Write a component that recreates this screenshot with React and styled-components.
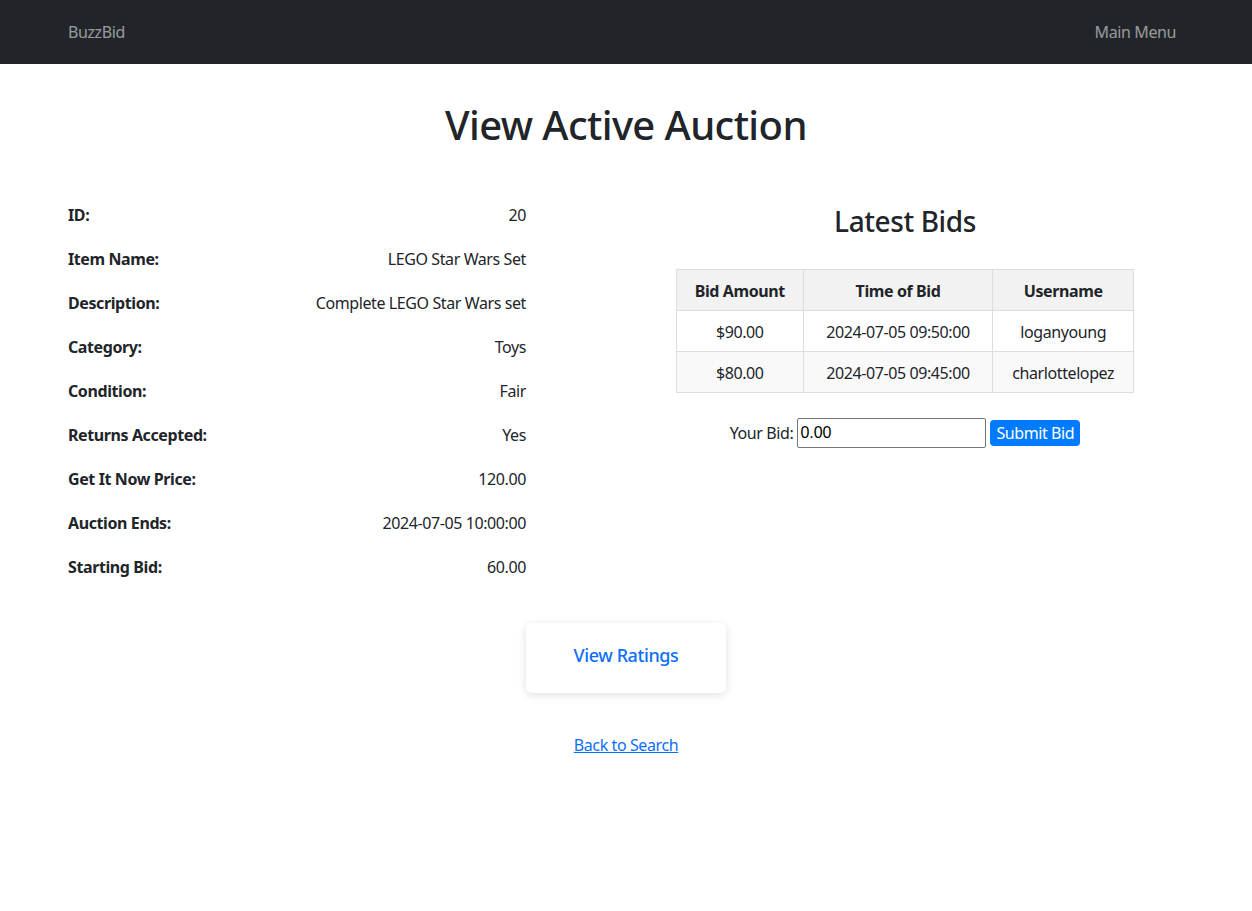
import styled, { createGlobalStyle } from 'styled-components';

const GlobalStyle = createGlobalStyle`
    body {
        margin: 0;
        font-family: "Noto Sans", "Open Sans", sans-serif;
        font-size: 16px;
        line-height: 1.5;
        letter-spacing: -0.4px;
        color: #212529;
        background: #fff;
    }
    * { box-sizing: border-box; }
`;

const details = [
    { label: 'ID:', value: '20' },
    { label: 'Item Name:', value: 'LEGO Star Wars Set' },
    { label: 'Description:', value: 'Complete LEGO Star Wars set' },
    { label: 'Category:', value: 'Toys' },
    { label: 'Condition:', value: 'Fair' },
    { label: 'Returns Accepted:', value: 'Yes' },
    { label: 'Get It Now Price:', value: '120.00' },
    { label: 'Auction Ends:', value: '2024-07-05 10:00:00' },
    { label: 'Starting Bid:', value: '60.00' },
];

const bids = [
    { amount: '$90.00', time: '2024-07-05 09:50:00', user: 'loganyoung' },
    { amount: '$80.00', time: '2024-07-05 09:45:00', user: 'charlottelopez' },
];

const App = () => {
    return (
        <>
            <GlobalStyle />
            <Navbar>
                <NavInner>
                    <Brand href="#">BuzzBid</Brand>
                    <NavLink href="#">Main Menu</NavLink>
                </NavInner>
            </Navbar>
            <Container>
                <Title>View Active Auction</Title>
                <Row>
                    <DetailsCol>
                        {details.map((d) => (
                            <DetailRow key={d.label}>
                                <Label>{d.label}</Label>
                                <Value>{d.value}</Value>
                            </DetailRow>
                        ))}
                    </DetailsCol>
                    <BidsCol>
                        <SubTitle>Latest Bids</SubTitle>
                        <Table>
                            <thead>
                                <tr>
                                    <Th>Bid Amount</Th>
                                    <Th>Time of Bid</Th>
                                    <Th>Username</Th>
                                </tr>
                            </thead>
                            <tbody>
                                {bids.map((b, i) => (
                                    <Tr key={b.time} $striped={i % 2 === 1}>
                                        <Td>{b.amount}</Td>
                                        <Td>{b.time}</Td>
                                        <Td>{b.user}</Td>
                                    </Tr>
                                ))}
                            </tbody>
                        </Table>
                        <BidForm onSubmit={(e) => e.preventDefault()}>
                            <label htmlFor="bid">Your Bid:</label>
                            <BidInput id="bid" type="text" defaultValue="0.00" />
                            <SubmitButton type="submit">Submit Bid</SubmitButton>
                        </BidForm>
                    </BidsCol>
                </Row>
                <RatingsCard href="#">View Ratings</RatingsCard>
                <BackLink href="#">Back to Search</BackLink>
            </Container>
        </>
    );
};

const Navbar = styled.nav`
    background-color: #212529;
    height: 64px;
    display: flex;
    align-items: center;
`;

const NavInner = styled.div`
    width: 1140px;
    margin: 0 auto;
    padding: 0 12px;
    display: flex;
    align-items: center;
    justify-content: space-between;
`;

const Brand = styled.a`
    color: rgba(255, 255, 255, 0.55);
    text-decoration: none;
    font-size: 16px;
`;

const NavLink = styled.a`
    color: rgba(255, 255, 255, 0.55);
    text-decoration: none;
    padding: 8px;
    font-size: 16px;
`;

const Container = styled.main`
    width: 1140px;
    margin: 0 auto;
    padding: 0 12px;
    display: flex;
    flex-direction: column;
    align-items: center;
`;

const Title = styled.h1`
    margin: 37px 0 54px;
    font-size: 40px;
    font-weight: 500;
    line-height: 1.2;
    letter-spacing: -0.6px;
`;

const Row = styled.div`
    align-self: stretch;
    display: flex;
    gap: 150px;
`;

const DetailsCol = styled.div`
    width: 458px;
    display: flex;
    flex-direction: column;
    gap: 20px;
`;

const DetailRow = styled.div`
    display: flex;
    justify-content: space-between;
`;

const Label = styled.span`
    font-weight: 700;
`;

const Value = styled.span`
    text-align: right;
`;

const BidsCol = styled.div`
    width: 458px;
    display: flex;
    flex-direction: column;
    align-items: center;
`;

const SubTitle = styled.h3`
    margin: 2px 0 30px;
    font-size: 28px;
    font-weight: 500;
    line-height: 1.2;
    letter-spacing: -0.4px;
`;

const Table = styled.table`
    width: 100%;
    border-collapse: collapse;
    margin-bottom: 25px;
`;

const Th = styled.th`
    border: 1px solid #ddd;
    background: #f2f2f2;
    padding: 9px 8px 7px;
    font-weight: 700;
    text-align: center;
`;

const Tr = styled.tr`
    background: ${(props) => (props.$striped ? '#f9f9f9' : '#fff')};
`;

const Td = styled.td`
    border: 1px solid #ddd;
    padding: 9px 8px 7px;
    text-align: center;
`;

const BidForm = styled.form`
    display: flex;
    align-items: center;
    gap: 4px;
`;

const BidInput = styled.input`
    width: 189px;
    height: 30px;
    font-family: "Liberation Sans", Arial, sans-serif;
    font-size: 16px;
    letter-spacing: 0;
    padding: 1px 2px;
    border: 1px solid #767676;
    border-radius: 2px;
    color: #000;
`;

const SubmitButton = styled.button`
    background: #007bff;
    color: #fff;
    border: none;
    border-radius: 4px;
    padding: 1px 6px;
    font-family: inherit;
    font-size: 16px;
    letter-spacing: inherit;
    line-height: 1.5;
    cursor: pointer;
`;

const RatingsCard = styled.a`
    margin-top: 44px;
    width: 200px;
    height: 70px;
    padding-bottom: 5px;
    display: flex;
    align-items: center;
    justify-content: center;
    border-radius: 6px;
    box-shadow: 0 2px 8px rgba(0, 0, 0, 0.12);
    color: #0d6efd;
    font-size: 18px;
    font-weight: 500;
    text-decoration: none;
`;

const BackLink = styled.a`
    margin-top: 40px;
    color: #0d6efd;
    text-decoration: underline;
`;

export default App;
